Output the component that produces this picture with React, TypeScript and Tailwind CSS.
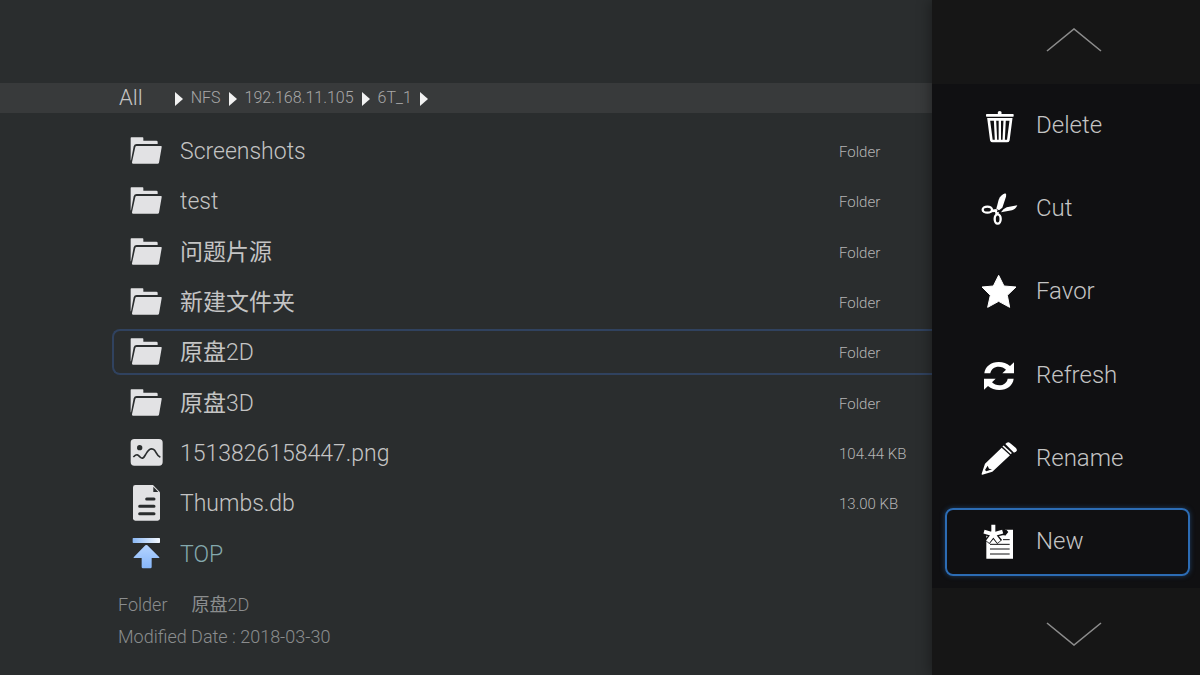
import { useState } from "react";
import type { ReactNode } from "react";

type IconProps = { children: ReactNode };

function Icon({ children }: IconProps) {
    return (
        <svg
            viewBox="0 0 108 108"
            className="size-9 shrink-0 overflow-visible"
            fill="currentColor"
            aria-hidden="true"
        >
            {children}
        </svg>
    );
}

// File Icons
const folderIcon = (
    <Icon>
        <path d="M8 15q0-2 2-2h34q2 0 2 2v8h39q4 0 4 4v6H26q-7 0-9 7L9 82H8z" />
        <path d="M25 39h74q3 0 2 4l-8 46q-1 3-4 3H15q-4 0-3-4l10-46q1-3 3-3z" />
    </Icon>
);

const imageIcon = (
    <Icon>
        <rect x="8" y="12" width="96" height="80" rx="11" />
        <circle cx="35" cy="38" r="8" fill="#2a2d2e" />
        <path
            d="M16 66C28 54 31 61 36 66C43 73 47 69 52 60C60 44 68 39 76 43C85 47 84 62 97 67"
            fill="none"
            stroke="#2a2d2e"
            strokeWidth="5"
        />
    </Icon>
);

const documentIcon = (
    <Icon>
        <path d="M22 0h53l21 22v78q0 7-7 7H22q-7 0-7-7V7q0-7 7-7z" />
        <path d="M76 5v16h15z" fill="#2a2d2e" />
        <path
            d="M56 42h22M35 64h43M35 86h43"
            stroke="#2a2d2e"
            strokeWidth="9"
            strokeLinecap="round"
        />
    </Icon>
);

const topIcon = (
    <Icon>
        <defs>
            <linearGradient id="top-bar">
                <stop offset="0" stopColor="#8ab8f5" />
                <stop offset="1" stopColor="#f4f9ff" />
            </linearGradient>
            <linearGradient id="top-arrow" x2="0" y2="1">
                <stop offset="0" stopColor="#b5d4ff" />
                <stop offset="1" stopColor="#86b6fa" />
            </linearGradient>
        </defs>
        <rect x="14" y="6" width="82" height="15" rx="2" fill="url(#top-bar)" />
        <path
            d="M52 28q3-2 6 0l36 36q1 2-1 2H71v27q0 4-4 4H45q-4 0-4-4V66H18q-2 0-1-2z"
            fill="url(#top-arrow)"
        />
    </Icon>
);

// Menu Icons
const trashIcon = (
    <Icon>
        <circle cx="56" cy="15" r="6" />
        <rect x="15" y="18" width="83" height="8" rx="2" />
        <path
            d="M23 34H90L82 96q-1 3-4 3H35q-3 0-4-3z"
            fill="none"
            stroke="currentColor"
            strokeWidth="8"
        />
        <path
            d="M42 36L45 97M56.5 36V97M71 36L68 97"
            fill="none"
            stroke="currentColor"
            strokeWidth="7"
        />
    </Icon>
);

const scissorsIcon = (
    <Icon>
        <path d="M73 7Q77 9 75 17L64 50L54 58L46 53L53 26Q58 12 73 7z" />
        <path d="M109 43Q104 55 93 58L60 64Q66 53 77 49z" />
        <path d="M30 56L46 54L54 62L52 72H44L42 63L30 64z" />
        <ellipse
            cx="19"
            cy="56"
            rx="14"
            ry="9"
            fill="none"
            stroke="currentColor"
            strokeWidth="7"
        />
        <ellipse
            cx="50"
            cy="84"
            rx="9"
            ry="14"
            fill="none"
            stroke="currentColor"
            strokeWidth="7"
        />
        <circle cx="51" cy="61" r="3" fill="#101012" />
    </Icon>
);

const starIcon = (
    <Icon>
        <path
            d="M53 4L69 36L105 39L79 64L86 100L53 82L20 100L28 64L3 39L37 36z"
            stroke="currentColor"
            strokeWidth="3"
            strokeLinejoin="round"
        />
    </Icon>
);

const refreshArrow =
    "M10 46C12 26 30 12 53 12C66 12 78 16 87 24L99 13V46H64L75 35C69 29 62 26 53 26C40 26 30 34 28 46z";

const refreshIcon = (
    <Icon>
        <path d={refreshArrow} />
        <path d={refreshArrow} transform="rotate(180 54 54)" />
    </Icon>
);

const pencilIcon = (
    <Icon>
        <path d="M62 20L87 43L34 92L4 101Q1 101 2 98L12 68z" />
        <path d="M20 74L24 83L33 85L16 91L12 87z" fill="#101012" />
        <path d="M66 15L91 38" stroke="currentColor" strokeWidth="5" />
        <path d="M73 9Q79 2 86 5L104 20Q110 27 106 31L99 35z" />
    </Icon>
);

const newIcon = (
    <Icon>
        <path d="M16 34H72V17H96V104H16z" />
        <path d="M66 17H76L82 24L72 36z" fill="#101012" />
        <path
            d="M66 47H86M27 61H86M27 75H86M27 90H86"
            stroke="#101012"
            strokeWidth="3"
        />
        <path
            d="M37 31V3M37 31L9 23M37 31L65 23M37 31L18 54M37 31L56 54"
            stroke="#101012"
            strokeWidth="19"
        />
        <path
            d="M37 31V2M37 31L9 23M37 31L65 23M37 31L20 53M37 31L54 53"
            stroke="currentColor"
            strokeWidth="12"
        />
    </Icon>
);

const crumbs = ["NFS", "192.168.11.105", "6T_1"];

const files = [
    { name: "Screenshots", info: "Folder", icon: folderIcon },
    { name: "test", info: "Folder", icon: folderIcon },
    { name: "问题片源", info: "Folder", icon: folderIcon },
    { name: "新建文件夹", info: "Folder", icon: folderIcon },
    { name: "原盘2D", info: "Folder", icon: folderIcon },
    { name: "原盘3D", info: "Folder", icon: folderIcon },
    { name: "1513826158447.png", info: "104.44 KB", icon: imageIcon },
    { name: "Thumbs.db", info: "13.00 KB", icon: documentIcon },
    { name: "TOP", info: "", icon: topIcon },
];

const actions = [
    { label: "Delete", icon: trashIcon },
    { label: "Cut", icon: scissorsIcon },
    { label: "Favor", icon: starIcon },
    { label: "Refresh", icon: refreshIcon },
    { label: "Rename", icon: pencilIcon },
    { label: "New", icon: newIcon },
];

// Chinese glyphs are set one weight heavier than the light Latin text
function FileName({ name }: { name: string }) {
    return name.split(/([\u4e00-\u9fff]+)/).map((part, i) =>
        i % 2 ? (
            <span key={i} className="font-normal">
                {part}
            </span>
        ) : (
            part
        )
    );
}

function CrumbArrow() {
    return (
        <svg
            viewBox="0 0 8 14"
            className="mt-0.5 h-3.5 w-2 shrink-0 fill-[#f2f2f2]"
            aria-hidden="true"
        >
            <path d="M0 0L8 7L0 14z" />
        </svg>
    );
}

function Chevron({ points }: { points: string }) {
    return (
        <svg
            viewBox="0 0 56 24"
            className="h-6 w-14"
            fill="none"
            stroke="#8c8c8c"
            strokeWidth="1.6"
            aria-hidden="true"
        >
            <polyline points={points} />
        </svg>
    );
}

export default function App() {
    const [selected, setSelected] = useState("原盘2D");
    const [action, setAction] = useState("New");

    return (
        <div className="flex min-h-screen bg-[#2a2d2e] font-[Roboto,'Noto_Sans_CJK_SC',sans-serif] font-light text-[#c4c4c4]">
            <main className="flex min-w-0 flex-1 flex-col pt-[83px]">
                <nav
                    aria-label="Path"
                    className="flex h-[30px] items-center bg-[#383a3b] pl-[119px]"
                >
                    <button className="mr-8 text-[22px] leading-7">All</button>
                    <div className="flex items-center gap-2 text-base leading-7 text-[#a8a8a8]">
                        <CrumbArrow />
                        {crumbs.map((crumb) => (
                            <div key={crumb} className="flex items-center gap-2">
                                <button>{crumb}</button>
                                <CrumbArrow />
                            </div>
                        ))}
                    </div>
                </nav>

                <ul className="mt-[13px] grid flex-1 auto-rows-fr pl-28">
                    {files.map((file) => (
                        <li key={file.name} className="flex items-center">
                            <button
                                onClick={() => setSelected(file.name)}
                                className={`flex h-[46px] w-full items-center gap-4 rounded-l-lg border-2 border-r-0 pl-3.5 text-left ${
                                    selected === file.name
                                        ? "border-[#30425f]"
                                        : "border-transparent"
                                }`}
                            >
                                <span className="flex text-[#e2e2e4]">{file.icon}</span>
                                <span
                                    className={`flex-1 truncate pt-0.5 text-[23px] leading-8 ${
                                        file.name === "TOP" ? "text-[#84a9ad]" : ""
                                    }`}
                                >
                                    <FileName name={file.name} />
                                </span>
                                <span className="w-[93px] pt-0.5 text-[15px] text-[#b4b4b4]">
                                    {file.info}
                                </span>
                            </button>
                        </li>
                    ))}
                </ul>

                {/* Selected File Details */}
                <footer className="pt-[10px] pb-[22px] pl-[118px] text-[18px] leading-8 text-[#8b8d8e]">
                    <p className="flex gap-6">
                        <span>Folder</span>
                        <span>
                            <FileName name={selected} />
                        </span>
                    </p>
                    <p>Modified Date : 2018-03-30</p>
                </footer>
            </main>

            <aside className="z-10 flex w-[268px] shrink-0 flex-col bg-[#161616] shadow-[-2px_0_12px_rgba(0,0,0,0.35)]">
                <button
                    aria-label="Scroll up"
                    className="flex h-[84px] items-center justify-center pb-1 pl-4"
                >
                    <Chevron points="1,23 28,1 55,23" />
                </button>

                <ul className="grid flex-1 auto-rows-fr bg-[#101012] pr-2.5 pb-1 pl-[13px]">
                    {actions.map(({ label, icon }) => (
                        <li key={label} className="flex items-center">
                            <button
                                onClick={() => setAction(label)}
                                className={`flex h-[68px] w-full items-center gap-[19px] rounded-lg border-2 pl-[34px] text-left ${
                                    action === label
                                        ? "border-[#2c6cb4] shadow-[0_0_5px_rgba(44,108,180,0.5)]"
                                        : "border-transparent"
                                }`}
                            >
                                <span className="flex text-white">{icon}</span>
                                <span className="pb-0.5 text-2xl">{label}</span>
                            </button>
                        </li>
                    ))}
                </ul>

                <button
                    aria-label="Scroll down"
                    className="flex h-[87px] items-center justify-center pt-1 pl-4"
                >
                    <Chevron points="1,1 28,23 55,1" />
                </button>
            </aside>
        </div>
    );
}
